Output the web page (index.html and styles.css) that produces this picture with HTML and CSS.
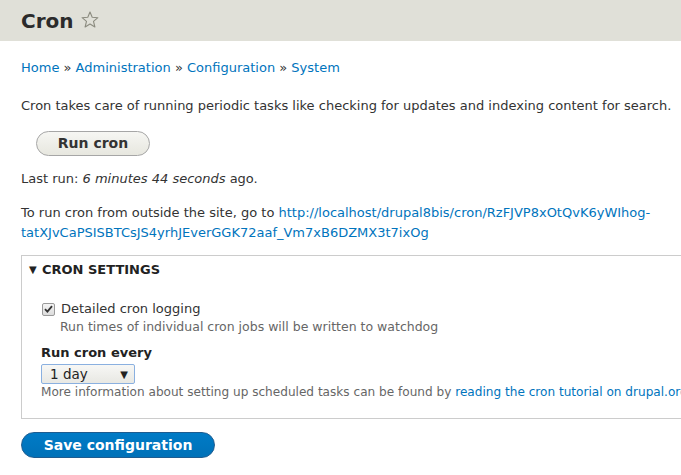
FILE: index.html
```html
<!DOCTYPE html>
<html>
<head>
<meta charset="utf-8">
<link rel="stylesheet" href="styles.css">
</head>
<body>
<header class="page-header">
  <h1 class="page-title">Cron <svg class="star" width="18" height="18" viewBox="0 0 18 18"><path d="M9 1 L11.2 6.3 L16.9 6.7 L12.5 10.4 L13.9 16 L9 13 L4.1 16 L5.5 10.4 L1.1 6.7 L6.8 6.3 Z" fill="none" stroke="#8b8b7f" stroke-width="1.1" stroke-linejoin="round"/></svg></h1>
</header>
<main class="content">
  <nav class="breadcrumb"><a href="#">Home</a> » <a href="#">Administration</a> » <a href="#">Configuration</a> » <a href="#">System</a></nav>
  <p class="intro">Cron takes care of running periodic tasks like checking for updates and indexing content for search.</p>
  <div class="run-row"><button class="btn">Run cron</button></div>
  <p class="last-run">Last run: <em>6 minutes 44 seconds</em> ago.</p>
  <p class="outside">To run cron from outside the site, go to <a href="#">http://localhost/drupal8bis/cron/RzFJVP8xOtQvK6yWIhog-tatXJvCaPSISBTCsJS4yrhJEverGGK72aaf_Vm7xB6DZMX3t7ixOg</a></p>
  <details class="settings" open>
    <summary class="settings-summary">Cron settings</summary>
    <div class="settings-body">
      <div class="check-row">
        <span class="checkbox"><svg width="9" height="8" viewBox="0 0 9 8"><path d="M1 4.2 L3.4 6.6 L8 1.2" fill="none" stroke="#333" stroke-width="1.8"/></svg></span>
        <label>Detailed cron logging</label>
      </div>
      <div class="desc desc-indent">Run times of individual cron jobs will be written to watchdog</div>
      <div class="field-label">Run cron every</div>
      <div class="select"><span>1 day</span><span class="arrow">▼</span></div>
      <div class="desc">More information about setting up scheduled tasks can be found by <a href="#">reading the cron tutorial on drupal.org</a>.</div>
    </div>
  </details>
  <div class="actions"><button class="btn btn-primary">Save configuration</button></div>
</main>
</body>
</html>
```
FILE: styles.css
```css
html, body {
  overflow: hidden;
}
body {
  margin: 0;
  width: 681px;
  font-family: "DejaVu Sans", sans-serif;
  font-size: 13px;
  color: #333;
  background: #fff;
}
a {
  color: #0074bd;
  text-decoration: none;
}
.page-header {
  background: #e0e0d8;
  height: 41px;
  padding: 0 21px;
  box-sizing: border-box;
  display: flex;
  align-items: center;
}
.page-title {
  margin: 0;
  font-size: 20px;
  font-weight: bold;
  color: #2b2b2b;
  display: flex;
  align-items: center;
  gap: 7px;
  line-height: 1;
}
.star {
  display: block;
  margin-top: -1px;
}
.content {
  padding: 0 21px;
}
.breadcrumb {
  margin-top: 17px;
  line-height: 20px;
}
.intro {
  margin: 18px 0 0;
  line-height: 20px;
  white-space: nowrap;
}
.run-row {
  margin-top: 15px;
  padding-left: 15px;
}
.btn {
  font-family: "DejaVu Sans", sans-serif;
  font-size: 14px;
  font-weight: bold;
  color: #333;
  height: 25px;
  padding: 0 20px;
  border: 1px solid #a6a6a6;
  border-radius: 20px;
  background: linear-gradient(#f6f6f3, #e7e7df);
  line-height: 23px;
  display: block;
}
.run-row .btn {
  width: 114px;
}
.last-run {
  margin: 13px 0 0;
  line-height: 20px;
}
.outside {
  margin: 14px 0 0;
  line-height: 20px;
}
.settings {
  margin-top: 12px;
  width: 700px;
  border: 1px solid #ccc;
  box-sizing: border-box;
  height: 164px;
}
.settings-summary {
  list-style: none;
  font-weight: bold;
  text-transform: uppercase;
  color: #222;
  padding: 4px 0 0 7px;
  line-height: 20px;
  cursor: pointer;
}
.settings-summary::-webkit-details-marker {
  display: none;
}
.settings-summary::before {
  content: "▼";
  font-size: 10px;
  display: inline-block;
  width: 13px;
  vertical-align: 1px;
}
.settings-body {
  padding: 19px 19px 0;
}
.check-row {
  display: flex;
  align-items: center;
  gap: 6px;
  line-height: 20px;
}
.checkbox {
  margin-left: 1px;
  width: 11px;
  height: 11px;
  border: 1px solid #9a9a9a;
  border-radius: 2px;
  background: linear-gradient(#f4f4f4, #dcdcdc);
  display: flex;
  align-items: center;
  justify-content: center;
}
.checkbox svg {
  display: block;
}
.desc {
  font-size: 12px;
  color: #666;
  line-height: 16px;
  white-space: nowrap;
}
.desc-indent {
  padding-left: 19px;
  font-size: 12.5px;
}
.field-label {
  font-weight: bold;
  color: #222;
  margin-top: 10px;
  line-height: 16px;
}
.select {
  margin-top: 3px;
  width: 94px;
  height: 20px;
  box-sizing: border-box;
  border: 1px solid #8ab0e0;
  border-radius: 2px;
  background: linear-gradient(#f7f7f5, #e8e8e3);
  display: flex;
  align-items: center;
  justify-content: space-between;
  padding: 0 6px 0 8px;
  font-size: 13.5px;
  color: #222;
}
.select .arrow {
  font-size: 10px;
}
.desc:last-child {
  font-size: 12.1px;
}
.actions {
  margin-top: 13px;
}
.btn-primary {
  width: 194px;
  height: 26px;
  color: #fff;
  border-color: #1e5c90;
  background: linear-gradient(#007bc6, #0071b8);
  padding: 0;
}
```
